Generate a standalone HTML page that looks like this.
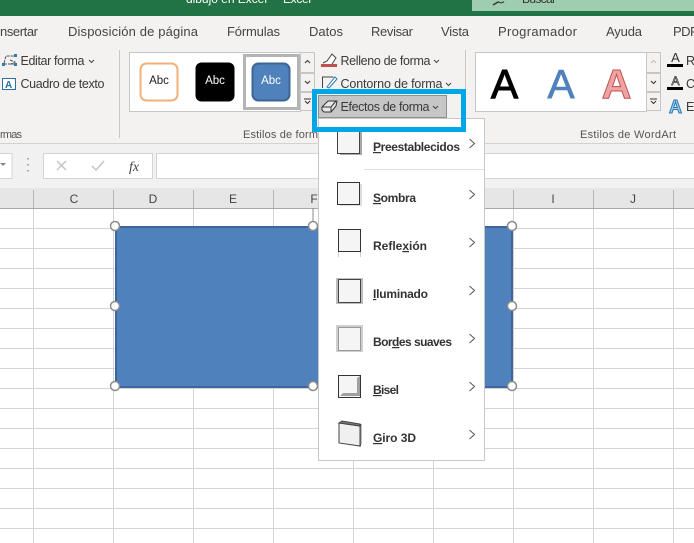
<!DOCTYPE html>
<html><head><meta charset="utf-8"><style>
html,body{margin:0;padding:0;background:#fff;width:694px;height:543px;overflow:hidden}
svg{display:block}
text{font-family:"Liberation Sans",sans-serif;fill:#3b3a39}
.t{font-size:13px;fill:#444}
.r{font-size:12.5px;fill:#3b3a39}
.g{font-size:11px;fill:#555}
.m{font-size:12px;font-weight:bold;fill:#333}
.h{font-size:12px;fill:#444;text-anchor:middle}
.ck{fill:none;stroke:#444;stroke-width:1}
</style></head><body>
<svg width="694" height="543" viewBox="0 0 694 543" xmlns="http://www.w3.org/2000/svg">
<rect width="694" height="543" fill="#fff"/>
<!-- title -->
<rect width="694" height="16" fill="#217346"/>
<rect x="472" y="0" width="222" height="11" fill="#9fcdb0"/>
<text x="186" y="3" style="font-size:12px;fill:#fff" textLength="81">dibujo en Excel</text>
<text x="283" y="3" style="font-size:12px;fill:#fff" textLength="28">Excel</text>
<text x="522" y="3" style="font-size:12px;fill:#333" textLength="34">Buscar</text>
<path d="M493 5l5-3" stroke="#333" stroke-width="1.500" fill="none"/>
<path d="M498 1.500a4 4 0 0 0 6 0" stroke="#333" fill="none"/>
<!-- ribbon -->
<rect y="16" width="694" height="127" fill="#f3f2f1"/>
<rect y="143" width="694" height="1" fill="#d2d2d2"/>
<text class="t" x="0" y="36" textLength="38">nsertar</text>
<text class="t" x="68" y="36" textLength="130">Disposición de página</text>
<text class="t" x="227" y="36" textLength="53">Fórmulas</text>
<text class="t" x="309" y="36" textLength="34">Datos</text>
<text class="t" x="371" y="36" textLength="42">Revisar</text>
<text class="t" x="441" y="36" textLength="28">Vista</text>
<text class="t" x="498" y="36" textLength="79">Programador</text>
<text class="t" x="606" y="36" textLength="36">Ayuda</text>
<text class="t" x="673" y="36" textLength="25">PDF</text>
<!-- left group -->
<path d="M4 63l2-7h8M10 60l5 2-4 2M4 64h12" fill="none" stroke="#555" stroke-dasharray="3 1"/>
<rect x="14" y="54" width="3" height="3" fill="#2b7cb3"/><rect x="2" y="63" width="3" height="3" fill="#2b7cb3"/><rect x="14" y="63" width="3" height="3" fill="#2b7cb3"/>
<rect x="2.500" y="78.500" width="13" height="11" fill="#fff" stroke="#2b6ea5"/>
<text x="5" y="88" style="font-size:10px;font-weight:bold;fill:#2b6ea5">A</text>
<text class="r" x="20.500" y="65" textLength="64">Editar forma</text>
<path class="ck" d="M89 60l2.500 2.500 2.500-2.500"/>
<text class="r" x="20.500" y="88" textLength="84">Cuadro de texto</text>
<text class="g" x="0" y="138" textLength="22">rmas</text>
<rect x="119" y="50" width="1" height="88" fill="#c8c8c8"/>
<!-- gallery 1 -->
<rect x="129.500" y="52.500" width="171" height="59" fill="#fff" stroke="#c6c6c6"/>
<rect x="140.500" y="63.500" width="37" height="37" rx="6" fill="#fff" stroke="#f0b27a" stroke-width="2"/>
<text x="159" y="84" style="font-size:11.500px;fill:#222;text-anchor:middle">Abc</text>
<rect x="195.500" y="62.500" width="39" height="39" rx="6" fill="#000"/>
<text x="215" y="84" style="font-size:11.500px;fill:#fff;text-anchor:middle">Abc</text>
<rect x="244.500" y="55.500" width="54" height="53" fill="#fff" stroke="#b4b4b4" stroke-width="3"/>
<rect x="252.500" y="63.500" width="37" height="37" rx="6" fill="#4f81bd" stroke="#3d6593" stroke-width="2"/>
<text x="271" y="84" style="font-size:11.500px;fill:#fff;text-anchor:middle">Abc</text>
<g fill="#f3f2f1" stroke="#c6c6c6">
<rect x="300.500" y="52.500" width="14" height="20"/>
<rect x="300.500" y="73.500" width="14" height="18"/>
<rect x="300.500" y="92.500" width="14" height="18"/>
</g>
<path d="M305 63l2.500-2.500 2.500 2.500M305 81l2.500 2.500 2.500-2.500M304 99h7M305 101l2.500 2.500 2.500-2.500" fill="none" stroke="#333"/>
<text class="g" x="243" y="138" textLength="75">Estilos de form</text>
<!-- shape cmds -->
<path d="M323 63l4-2 5-7 4 4-4 6" fill="#fff" stroke="#444"/>
<rect x="321" y="64" width="16" height="3" fill="#c0504d"/>
<text class="r" x="340.500" y="65" textLength="90">Relleno de forma</text>
<path class="ck" d="M434 60l2.500 2.500 2.500-2.500"/>
<path d="M322.500 88v-11h11" fill="none" stroke="#444"/>
<path d="M327 87l8-10 2 2-8 9z" fill="#fff" stroke="#2b7cb3"/>
<text class="r" x="340.500" y="88" textLength="102">Contorno de forma</text>
<path class="ck" d="M446 83l2.500 2.500 2.500-2.500"/>
<rect x="465" y="50" width="1" height="88" fill="#c8c8c8"/>
<!-- wordart -->
<rect x="475.500" y="52.500" width="171" height="59" fill="#fff" stroke="#c6c6c6"/>
<text x="504.500" y="98" style="font-size:41px;fill:#000;text-anchor:middle" stroke="#000" stroke-width="1">A</text>
<text x="561" y="98" style="font-size:41px;fill:#4f81bd;text-anchor:middle" stroke="#4f81bd" stroke-width=".6">A</text>
<text x="616.500" y="98" style="font-size:41px;font-weight:bold;fill:#efa3a3;text-anchor:middle" stroke="#c0504d" stroke-width="1">A</text>
<g fill="#f3f2f1" stroke="#c6c6c6">
<rect x="646.500" y="52.500" width="14" height="20"/>
<rect x="646.500" y="73.500" width="14" height="18"/>
<rect x="646.500" y="92.500" width="14" height="18"/>
</g>
<path d="M651 63l2.500-2.500 2.500 2.500" fill="none" stroke="#bbb"/>
<path d="M651 81l2.500 2.500 2.500-2.500M650 99h7M651 101l2.500 2.500 2.500-2.500" fill="none" stroke="#333"/>
<text x="675.500" y="62" style="font-size:13px;fill:#333;text-anchor:middle">A</text>
<rect x="667" y="64" width="16" height="3" fill="#000"/>
<text x="675.500" y="85" style="font-size:12px;fill:#f3f2f1;text-anchor:middle" stroke="#333" stroke-width=".7">A</text>
<rect x="667" y="87" width="16" height="3" fill="#000"/>
<text x="675.500" y="113" style="font-size:18px;font-weight:bold;fill:#9cc8ec;text-anchor:middle" stroke="#2b7cb3" stroke-width="1">A</text>
<text class="r" x="686" y="65">R</text><text class="r" x="686" y="88">C</text><text class="r" x="686" y="111">Ef</text>
<text class="g" x="580" y="138" textLength="96">Estilos de WordArt</text>
<!-- formula bar -->
<rect y="144" width="694" height="44" fill="#f1f1f1"/>
<rect x="-2" y="153.500" width="14" height="25" fill="#fff" stroke="#d4d4d4"/>
<path d="M0 163h6l-3 3z" fill="#888"/>
<path d="M28 158v1.500M28 164v1.500M28 170v1.500" stroke="#aaa" stroke-width="2" fill="none"/>
<rect x="43.500" y="153.500" width="109" height="25" fill="#fff" stroke="#d4d4d4"/>
<rect x="156.500" y="153.500" width="560" height="25" fill="#fff" stroke="#d4d4d4"/>
<path d="M57 161l9 9M66 161l-9 9" stroke="#c4c4c4" stroke-width="1.500" fill="none"/>
<path d="M92 166l4 4 8-9" stroke="#c4c4c4" stroke-width="1.500" fill="none"/>
<text x="129" y="171" style="font-family:'Liberation Serif',serif;font-style:italic;font-size:14px;fill:#444">fx</text>
<!-- headers -->
<rect y="188" width="694" height="20" fill="#e6e6e6"/>
<rect y="208" width="694" height="1" fill="#a8a8a8"/>
<g fill="#b8b8b8">
<rect x="33" y="190" width="1" height="18"/><rect x="113" y="190" width="1" height="18"/><rect x="193" y="190" width="1" height="18"/><rect x="273" y="190" width="1" height="18"/><rect x="353" y="190" width="1" height="18"/><rect x="433" y="190" width="1" height="18"/><rect x="513" y="190" width="1" height="18"/><rect x="593" y="190" width="1" height="18"/><rect x="673" y="190" width="1" height="18"/>
</g>
<text class="h" x="74" y="203">C</text><text class="h" x="153" y="203">D</text><text class="h" x="233" y="203">E</text><text class="h" x="314" y="203">F</text><text class="h" x="553" y="203">I</text><text class="h" x="633" y="203">J</text>
<!-- grid -->
<g fill="#d4d4d4">
<rect y="228" width="694" height="1"/><rect y="248" width="694" height="1"/><rect y="268" width="694" height="1"/><rect y="288" width="694" height="1"/><rect y="308" width="694" height="1"/><rect y="328" width="694" height="1"/><rect y="348" width="694" height="1"/><rect y="368" width="694" height="1"/><rect y="388" width="694" height="1"/><rect y="408" width="694" height="1"/><rect y="428" width="694" height="1"/><rect y="448" width="694" height="1"/><rect y="468" width="694" height="1"/><rect y="488" width="694" height="1"/><rect y="508" width="694" height="1"/><rect y="528" width="694" height="1"/>
<rect x="33" y="209" width="1" height="334"/><rect x="113" y="209" width="1" height="334"/><rect x="193" y="209" width="1" height="334"/><rect x="273" y="209" width="1" height="334"/><rect x="353" y="209" width="1" height="334"/><rect x="433" y="209" width="1" height="334"/><rect x="513" y="209" width="1" height="334"/><rect x="593" y="209" width="1" height="334"/><rect x="673" y="209" width="1" height="334"/>
</g>
<!-- shape -->
<rect x="116" y="227" width="396" height="160" fill="#4f81bd" stroke="#41659a" stroke-width="2"/>
<path d="M313 208v18" stroke="#888"/>
<g fill="#fff" stroke="#8c8c8c" stroke-width="1.500">
<circle cx="115" cy="226" r="4.500"/><circle cx="313" cy="226" r="4.500"/><circle cx="512" cy="226" r="4.500"/>
<circle cx="115" cy="306" r="4.500"/><circle cx="512" cy="306" r="4.500"/>
<circle cx="115" cy="386" r="4.500"/><circle cx="313" cy="386" r="4.500"/><circle cx="512" cy="386" r="4.500"/>
</g>
<!-- menu -->
<rect x="318.500" y="118.500" width="166" height="342" fill="#fff" stroke="#c8c8c8"/>
<rect x="364" y="169" width="120" height="1" fill="#e1e1e1"/>
<!-- icons -->
<rect x="340" y="132" width="22" height="23" fill="#a8a8a8"/>
<rect x="337.500" y="131.500" width="22" height="22" fill="#f5f5f5" stroke="#444"/>
<rect x="340" y="184" width="22" height="22" fill="#ddd"/>
<rect x="337.500" y="182.500" width="22" height="22" fill="#f5f5f5" stroke="#333"/>
<rect x="338.500" y="229.500" width="22" height="22" fill="#f5f5f5" stroke="#333"/>
<path d="M338.500 252v5M360.500 252v5" stroke="#ccc"/>
<rect x="336" y="278" width="27" height="26" fill="#bdbdbd"/>
<rect x="338.500" y="279.500" width="22" height="23" fill="#f5f5f5" stroke="#444"/>
<rect x="336" y="325" width="27" height="27" fill="#cfcfcf"/>
<rect x="338.500" y="327.500" width="22" height="23" fill="#f5f5f5" stroke="#999"/>
<rect x="338.500" y="375.500" width="22" height="22" fill="#f5f5f5" stroke="#333"/>
<path d="M340 396l3-3h14v-15l3-2v20z" fill="#a0a0a0"/>
<path d="M339 423l21 3v20l-21-3z" fill="#f0f0f0" stroke="#444"/>
<path d="M339 423l3-2 18 3v2z" fill="#777" stroke="#444"/>
<path d="M360 426l1-2v20l-1 3z" fill="#aaa" stroke="#444" stroke-width=".7"/>
<!-- menu text -->
<text class="m" x="373" y="151" textLength="87"><tspan text-decoration="underline">P</tspan>reestablecidos</text>
<text class="m" x="373" y="202" textLength="43"><tspan text-decoration="underline">S</tspan>ombra</text>
<text class="m" x="373" y="250" textLength="54">Refle<tspan text-decoration="underline">x</tspan>ión</text>
<text class="m" x="373" y="298" textLength="55"><tspan text-decoration="underline">I</tspan>luminado</text>
<text class="m" x="373" y="346" textLength="79">Bor<tspan text-decoration="underline">d</tspan>es suaves</text>
<text class="m" x="373" y="394" textLength="26"><tspan text-decoration="underline">B</tspan>isel</text>
<text class="m" x="373" y="442" textLength="43"><tspan text-decoration="underline">G</tspan>iro 3D</text>
<g fill="none" stroke="#555">
<path d="M469.500 139l5 4.500-5 4.500"/>
<path d="M469.500 190l5 4.500-5 4.500"/>
<path d="M469.500 238l5 4.500-5 4.500"/>
<path d="M469.500 286l5 4.500-5 4.500"/>
<path d="M469.500 334l5 4.500-5 4.500"/>
<path d="M469.500 382l5 4.500-5 4.500"/>
<path d="M469.500 430l5 4.500-5 4.500"/>
</g>
<!-- effects button + highlight -->
<rect x="318.500" y="95.500" width="128" height="22" fill="#c6c6c6" stroke="#8f8f8f"/>
<path d="M322 107l6-6h9l-1 5-5 6h-7l-2-2z" fill="#e8e8e8" stroke="#333"/>
<path d="M322 107h9l5-6M331 107v5" fill="none" stroke="#333"/>
<text class="r" x="340.500" y="111" textLength="89">Efectos de forma</text>
<path class="ck" d="M433 106l2.500 2.500 2.500-2.500"/>
<rect x="314.500" y="91.500" width="149" height="38" fill="none" stroke="#00a6e6" stroke-width="5"/>
</svg>
</body></html>
